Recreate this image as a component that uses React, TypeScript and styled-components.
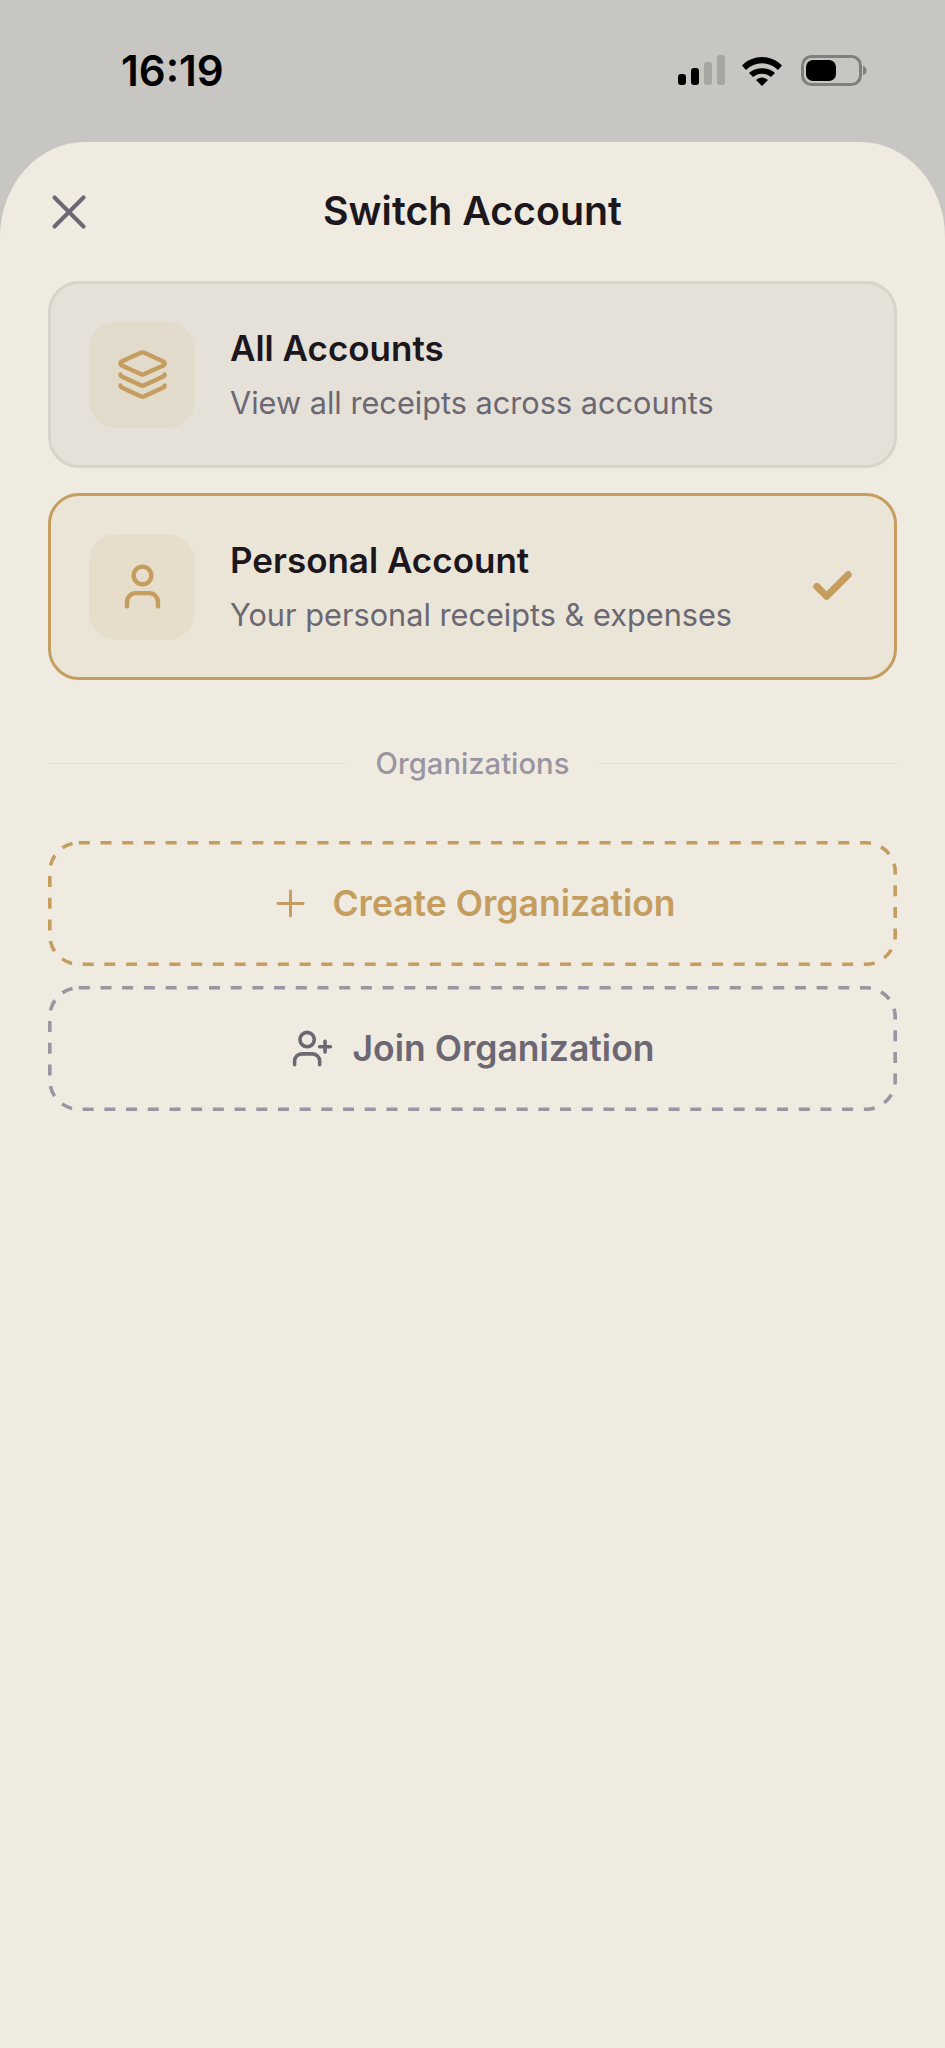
import React from "react"
import styled, { createGlobalStyle } from "styled-components"
import { Check, Layers, Plus, User, UserPlus, X } from "lucide-react"

const GOLD = "#c49d5f"
const GREY = "#9a95a0"
const SLATE = "#6b6773"

const Global = createGlobalStyle`
  html, body { margin: 0; padding: 0; }
  body { background: #c7c6c2; font-family: Inter, "Noto Sans", sans-serif; }
`

const Page = styled.div`
  width: 945px;
  height: 2048px;
  display: flex;
  flex-direction: column;
  background: #c7c6c2;
`

const StatusBar = styled.div`
  height: 142px;
  flex: none;
  box-sizing: border-box;
  padding: 46px 78px 0 121px;
  display: flex;
  justify-content: space-between;
  align-items: flex-start;
`

const Time = styled.div`
  font-size: 42px;
  line-height: 50px;
  font-weight: 600;
  color: #000;
`

const StatusIcons = styled.svg`
  margin-top: 9px;
`

const Sheet = styled.div`
  flex: 1;
  background: #efebe1;
  border-radius: 85px 85px 0 0 / 95px 95px 0 0;
  padding: 0 48px;
  display: flex;
  flex-direction: column;
`

const Header = styled.div`
  height: 139px;
  flex: none;
  display: grid;
  grid-template-columns: 1fr auto 1fr;
  align-items: center;
`

const CloseButton = styled.div`
  display: flex;
  align-items: center;
  color: ${SLATE};
  margin-left: -8px;
`

const Title = styled.div`
  font-size: 39.3px;
  font-weight: 600;
  color: #1c171d;
  padding-bottom: 2px;
`

const CardList = styled.div`
  display: flex;
  flex-direction: column;
  gap: 25px;
`

const Card = styled.div<{ $active?: boolean }>`
  height: 187px;
  box-sizing: border-box;
  padding: 0 38px;
  display: flex;
  align-items: center;
  gap: 35px;
  border-radius: 31px;
  border: 3px solid ${(p) => (p.$active ? GOLD : "#d8d4ca")};
  background: ${(p) => (p.$active ? "#ebe5d8" : "#e5e1d9")};
`

const IconBox = styled.div<{ $active?: boolean }>`
  width: 106px;
  height: 106px;
  flex: none;
  border-radius: 27px;
  background: ${(p) => (p.$active ? "#e6ddca" : "#e2dbcb")};
  color: ${GOLD};
  display: flex;
  align-items: center;
  justify-content: center;
`

const CardText = styled.div`
  flex: 1;
  display: flex;
  flex-direction: column;
  gap: 13px;
`

const CardTitle = styled.div`
  font-size: 35px;
  line-height: 44px;
  font-weight: 600;
  color: #1c171d;
`

const CardSub = styled.div`
  font-size: 30.7px;
  line-height: 40px;
  color: ${SLATE};
`

const CheckMark = styled(Check)`
  color: ${GOLD};
  flex: none;
`

const Divider = styled.div`
  margin-top: 68px;
  height: 30px;
  display: flex;
  align-items: center;
  gap: 30px;
`

const Line = styled.div`
  flex: 1;
  height: 1px;
  background: #e3dfd6;
`

const DividerLabel = styled.div`
  font-size: 29.2px;
  font-weight: 500;
  color: ${GREY};
  padding-top: 1px;
`

const ActionList = styled.div`
  margin-top: 63px;
  display: flex;
  flex-direction: column;
  gap: 20px;
`

const ActionButton = styled.div<{ $color: string; $gap: number }>`
  position: relative;
  height: 125px;
  display: flex;
  align-items: center;
  justify-content: center;
  gap: ${(p) => p.$gap}px;
  color: ${(p) => p.$color};
  font-size: 35.5px;
  font-weight: 600;
`

const DashFrame = styled.svg`
  position: absolute;
  inset: 0;
`

const Dashes = ({ color }: { color: string }) => (
  <DashFrame width="849" height="125">
    <rect x="1.8" y="1.8" width="845.4" height="121.4" rx="29" fill="none" stroke={color} strokeWidth="3.6" strokeDasharray="11 10.7" />
  </DashFrame>
)

const App = () => {
  return (
    <Page>
      <Global />
      <StatusBar>
        <Time>16:19</Time>
        <StatusIcons width="189" height="32" viewBox="0 0 189 32">
          <rect x="0" y="19" width="8" height="11" rx="3" fill="#000" />
          <rect x="13" y="13" width="8" height="17" rx="3" fill="#000" />
          <rect x="26" y="7" width="8" height="23" rx="3" fill="#a6a5a2" />
          <rect x="39" y="0" width="8" height="30" rx="3" fill="#a6a5a2" />
          <path d="M64 10.5 C75 -1 93 -1 104 10.5 L100 15 C91 6 77 6 68 15 Z" fill="#000" />
          <path d="M71 18 C77 11.5 91 11.5 97 18 L93 22 C88 17.5 80 17.5 75 22 Z" fill="#000" />
          <path d="M78 25 C81.5 21.5 86.5 21.5 90 25 L84 31 Z" fill="#000" />
          <rect x="124.5" y="1.5" width="58" height="28" rx="9" fill="none" stroke="#7f7f7c" strokeWidth="3" />
          <rect x="128" y="5" width="30" height="21" rx="7" fill="#000" />
          <path d="M185 11 C188 12 188.5 13.5 188.5 15.5 C188.5 17.5 188 19 185 20 Z" fill="#7f7f7c" />
        </StatusIcons>
      </StatusBar>
      <Sheet>
        <Header>
          <CloseButton>
            <X size={58} strokeWidth={1.7} />
          </CloseButton>
          <Title>Switch Account</Title>
        </Header>
        <CardList>
          <Card>
            <IconBox>
              <Layers size={53} strokeWidth={2} />
            </IconBox>
            <CardText>
              <CardTitle>All Accounts</CardTitle>
              <CardSub>View all receipts across accounts</CardSub>
            </CardText>
          </Card>
          <Card $active>
            <IconBox $active>
              <User size={53} strokeWidth={2} />
            </IconBox>
            <CardText>
              <CardTitle>Personal Account</CardTitle>
              <CardSub>Your personal receipts &amp; expenses</CardSub>
            </CardText>
            <CheckMark size={47} strokeWidth={3.6} />
          </Card>
        </CardList>
        <Divider>
          <Line />
          <DividerLabel>Organizations</DividerLabel>
          <Line />
        </Divider>
        <ActionList>
          <ActionButton $color={GOLD} $gap={20}>
            <Dashes color={GOLD} />
            <Plus size={43} strokeWidth={1.6} />
            Create Organization
          </ActionButton>
          <ActionButton $color={SLATE} $gap={19}>
            <Dashes color={GREY} />
            <UserPlus size={43} strokeWidth={2} />
            Join Organization
          </ActionButton>
        </ActionList>
      </Sheet>
    </Page>
  )
}

export default App
